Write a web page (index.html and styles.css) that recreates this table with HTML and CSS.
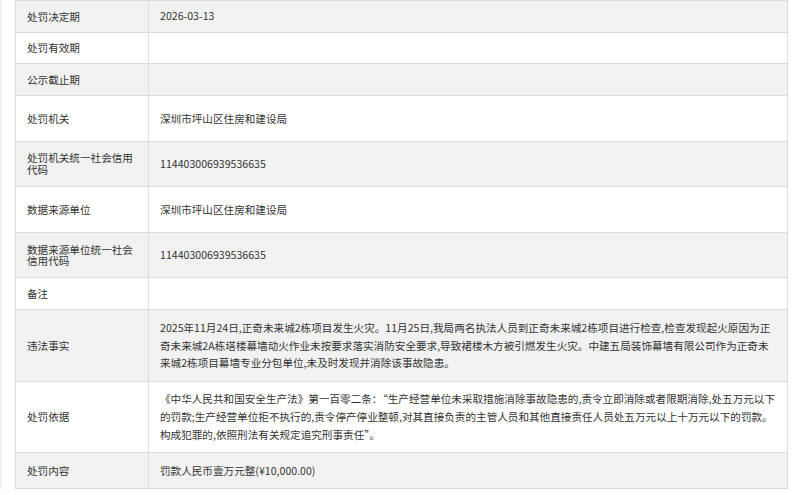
FILE: index.html
```html
<!DOCTYPE html>
<html lang="zh-CN">
<head>
  <meta charset="UTF-8" />
  <meta name="viewport" content="width=device-width, initial-scale=1" />
  <title>行政处罚详情</title>
  <link rel="stylesheet" href="styles.css">
</head>
<body>
  <div class="page">
    <table class="detail-table">
      <colgroup>
        <col class="col-label" />
        <col />
      </colgroup>
      <tbody>
        <tr class="row-s">
          <th>处罚决定期</th>
          <td>2026-03-13</td>
        </tr>
        <tr class="row-s">
          <th>处罚有效期</th>
          <td></td>
        </tr>
        <tr class="row-s">
          <th>公示截止期</th>
          <td></td>
        </tr>
        <tr class="row-m">
          <th>处罚机关</th>
          <td>深圳市坪山区住房和建设局</td>
        </tr>
        <tr class="row-m">
          <th>处罚机关统一社会信用代码</th>
          <td>114403006939536635</td>
        </tr>
        <tr class="row-m">
          <th>数据来源单位</th>
          <td>深圳市坪山区住房和建设局</td>
        </tr>
        <tr class="row-m">
          <th>数据来源单位统一社会信用代码</th>
          <td>114403006939536635</td>
        </tr>
        <tr class="row-s">
          <th>备注</th>
          <td></td>
        </tr>
        <tr class="row-l">
          <th>违法事实</th>
          <td class="long">2025年11月24日,正奇未来城2栋项目发生火灾。11月25日,我局两名执法人员到正奇未来城2栋项目进行检查,检查发现起火原因为正<br>奇未来城2A栋塔楼幕墙动火作业未按要求落实消防安全要求,导致裙楼木方被引燃发生火灾。中建五局装饰幕墙有限公司作为正奇未<br>来城2栋项目幕墙专业分包单位,未及时发现并消除该事故隐患。</td>
        </tr>
        <tr class="row-l">
          <th>处罚依据</th>
          <td class="long">《中华人民共和国安全生产法》第一百零二条：“生产经营单位未采取措施消除事故隐患的,责令立即消除或者限期消除,处五万元以下<br>的罚款;生产经营单位拒不执行的,责令停产停业整顿,对其直接负责的主管人员和其他直接责任人员处五万元以上十万元以下的罚款。<br>构成犯罪的,依照刑法有关规定追究刑事责任”。</td>
        </tr>
        <tr class="row-last">
          <th>处罚内容</th>
          <td>罚款人民币壹万元整(¥10,000.00)</td>
        </tr>
      </tbody>
    </table>
  </div>
</body>
</html>
```

FILE: styles.css
```css
body {
  margin: 0;
  background: #fff;
  font-family: "Noto Sans CJK SC", "Microsoft YaHei", sans-serif;
  font-size: 10.6px;
  color: #333;
}
.page {
  border-left: 2px solid #f2f2f2;
  padding-left: 13px;
}
.detail-table {
  width: 773px;
  border-collapse: collapse;
  table-layout: fixed;
}
.col-label {
  width: 133px;
}
.detail-table th,
.detail-table td {
  border: 1px solid #dcdcdc;
  padding: 0 10px 0 11px;
  text-align: left;
  vertical-align: middle;
  font-weight: normal;
}
.detail-table th {
  line-height: 11.5px;
}
.detail-table td {
  line-height: 17.7px;
}
.detail-table td.long {
  white-space: nowrap;
  letter-spacing: 0;
}
.detail-table tr:nth-child(odd) {
  background: #f2f2f2;
}
.row-s {
  height: 31.7px;
}
.row-m {
  height: 45.6px;
}
.row-l {
  height: 71.6px;
}
.row-last {
  height: 36px;
}
```
